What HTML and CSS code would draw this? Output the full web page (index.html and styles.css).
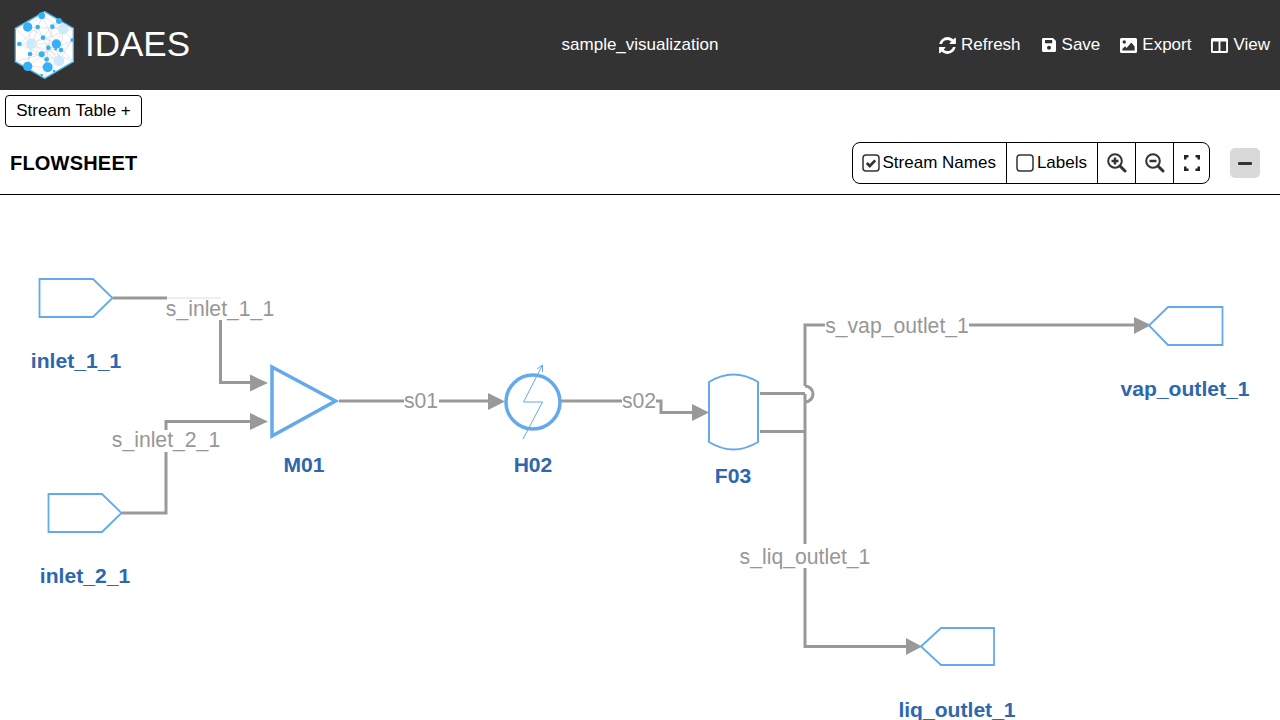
FILE: index.html
```html
<!DOCTYPE html>
<html lang="en">
<head>
<meta charset="utf-8">
<title>IDAES Flowsheet Visualizer</title>
<link rel="stylesheet" href="styles.css">
</head>
<body>
<header class="topbar">
  <div class="brand">
    <svg class="logo" viewBox="0 0 210 240" width="70" height="80" aria-hidden="true">
      <polygon points="104,20 190,70 190,170 104,220 16,170 16,70" class="hex"/>
      <g class="web">
        <path d="M53 66L160 72L139 117L64 116L53 184L113 187L147 168L139 117L95 32L53 66L64 116L95 148L113 187M83 66L99 98L139 117M127 65L160 72L187 105L147 168M28 117L64 116L99 98L127 65M60 147L95 148L139 117M16 70L64 116L190 170M190 70L64 116M104 20L83 66L60 147L53 184M104 220L113 187L110 163L115 128L99 98M16 170L95 148L190 105M147 48L127 65L115 128L147 168M153 135L139 117M53 66L139 117L190 170M28 117L95 148L147 168M53 184L139 117M64 116L147 168M95 32L160 72L153 135M83 66L28 117M113 187L187 105"/>
      </g>
      <g class="dot-soft">
        <circle cx="160" cy="72" r="16"/><circle cx="64" cy="116" r="16"/><circle cx="147" cy="168" r="16"/>
      </g>
      <g class="dot-strong">
        <circle cx="53" cy="66" r="14"/><circle cx="139" cy="117" r="14"/><circle cx="53" cy="184" r="14"/><circle cx="113" cy="187" r="15"/><circle cx="95" cy="32" r="10"/><circle cx="147" cy="48" r="9"/><circle cx="95" cy="148" r="9"/>
        <circle cx="83" cy="66" r="7"/><circle cx="127" cy="65" r="7"/><circle cx="28" cy="117" r="7"/><circle cx="99" cy="98" r="7"/><circle cx="115" cy="128" r="7"/><circle cx="153" cy="135" r="7"/><circle cx="60" cy="147" r="7"/><circle cx="110" cy="163" r="7"/><circle cx="137" cy="133" r="4"/><circle cx="132" cy="198" r="4"/><circle cx="95" cy="210" r="4"/><circle cx="187" cy="105" r="6"/>
      </g>
    </svg>
    <span class="brand-name">IDAES</span>
  </div>
  <div class="model-name">sample_visualization</div>
  <nav class="menu">
    <a class="menu-item">
      <svg class="icon icon-refresh" viewBox="120 120 1552 1552"><path d="M1639 1056q0 5-1 7-64 268-268 434.5t-478 166.5q-146 0-282.5-55t-243.5-157l-129 129q-19 19-45 19t-45-19-19-45v-448q0-26 19-45t45-19h448q26 0 45 19t19 45-19 45l-137 137q71 66 161 102t187 36q134 0 250-65t186-179q11-17 53-117 8-23 30-23h192q13 0 22.5 9.5t9.5 22.5zm25-800v448q0 26-19 45t-45 19h-448q-26 0-45-19t-19-45 19-45l138-138q-148-137-349-137-134 0-250 65t-186 179q-11 17-53 117-8 23-30 23h-199q-13 0-22.5-9.5t-9.5-22.5v-7q65-268 270-434.5t480-166.5q146 0 284 55.5t245 156.5l130-129q19-19 45-19t45 19 19 45z"/></svg>
      Refresh</a>
    <a class="menu-item">
      <svg class="icon" viewBox="0 0 16 16"><path fill-rule="evenodd" d="M2 1h10l3 3v9.500a1.500 1.500 0 0 1-1.500 1.500h-11A1.500 1.500 0 0 1 1 13.500v-11A1.500 1.500 0 0 1 2 1zM4 3v3.200h7.200V3zM8 8.700a2 2 0 1 0 0 4 2 2 0 0 0 0-4z"/></svg>
      Save</a>
    <a class="menu-item">
      <svg class="icon icon-wide" viewBox="0 0 18 15" preserveAspectRatio="none"><path fill-rule="evenodd" d="M1.500 0h15A1.500 1.500 0 0 1 18 1.500v12a1.500 1.500 0 0 1-1.500 1.500h-15A1.500 1.500 0 0 1 0 13.500v-12A1.500 1.500 0 0 1 1.500 0zM4.500 2.200a1.800 1.800 0 1 0 0 3.600 1.800 1.800 0 0 0 0-3.600zM2.500 12.500h13V8.500l-3.500-4-5 5.500-1.700-1.700-2.800 2.700z"/></svg>
      Export</a>
    <a class="menu-item">
      <svg class="icon icon-wide" viewBox="0 0 18 15" preserveAspectRatio="none"><path fill-rule="evenodd" d="M1.500 0h15A1.500 1.500 0 0 1 18 1.500v12a1.500 1.500 0 0 1-1.500 1.500h-15A1.500 1.500 0 0 1 0 13.500v-12A1.500 1.500 0 0 1 1.500 0zM2 3.500v9.500h6V3.500zM10 3.500v9.500h6V3.500z"/></svg>
      View</a>
  </nav>
</header>

<div class="stream-row"><button class="stream-btn">Stream Table +</button></div>

<section class="flow-head">
  <h1 class="flow-title">FLOWSHEET</h1>
  <div class="toolbar">
    <div class="tool tool-check">
      <svg class="check-icon" viewBox="0 0 18 18"><rect x="1" y="1" width="16" height="16" rx="3" class="box"/><path d="M4.800 9l3 3 5.400-5.600" class="tick"/></svg>
      Stream Names</div>
    <div class="tool tool-check">
      <svg class="check-icon" viewBox="0 0 18 18"><rect x="1" y="1" width="16" height="16" rx="3" class="box"/></svg>
      Labels</div>
    <div class="tool tool-icon">
      <svg class="tool-svg" viewBox="0 0 20 20"><circle cx="8" cy="8" r="6.800" class="lens"/><path d="M13 13l5 5" class="handle"/><path d="M8 4.500v7M4.500 8h7" class="sign"/></svg>
    </div>
    <div class="tool tool-icon">
      <svg class="tool-svg" viewBox="0 0 20 20"><circle cx="8" cy="8" r="6.800" class="lens"/><path d="M13 13l5 5" class="handle"/><path d="M4.500 8h7" class="sign"/></svg>
    </div>
    <div class="tool tool-icon">
      <svg class="tool-svg tool-expand" viewBox="0 0 16 16"><path d="M1.200 4.500V1.200H4.500M11.500 1.200h3.300V4.500M14.800 11.500v3.300H11.500M4.500 14.800H1.200V11.500" class="corner"/></svg>
    </div>
  </div>
  <button class="collapse-btn" aria-label="Collapse"><span class="collapse-bar"></span></button>
</section>

<svg class="diagram" viewBox="0 195 1280 525" width="1280" height="525">
  <g class="pipes">
    <path class="pipe-faint" d="M166 298H221"/>
    <path d="M113 298H167"/>
    <path d="M220.500 320V382.500H252"/>
    <path d="M122 513H166V452"/>
    <path d="M166 430V421.500H252"/>
    <path d="M339 401H404"/>
    <path d="M439 401H490"/>
    <path d="M561 401H622"/>
    <path d="M656 401H661V412.500H694"/>
    <path d="M760 393.500H805"/>
    <path d="M760 431.500H805"/>
    <path d="M825 325H805V386"/>
    <path class="pipe-jump" d="M805 386A8 8 0 0 1 805 402"/>
    <path d="M805 394V544"/>
    <path d="M805 568V646.500H908"/>
    <path d="M969 325H1136"/>
  </g>
  <g class="arrows">
    <polygon points="250,374.500 268,383 250,391.500"/>
    <polygon points="250,413 268,421.500 250,430"/>
    <polygon points="488,393 505,401.500 488,410"/>
    <polygon points="692,404 709,412.500 692,421"/>
    <polygon points="1134,317 1151,325 1134,334"/>
    <polygon points="906,638 922,646.500 906,655"/>
  </g>

  <g class="unit">
    <polygon points="39.500,279 93,279 112.500,298 93,317 39.500,317"/>
    <polygon points="48.500,494 102,494 121.500,513 102,532 48.500,532"/>
    <polygon points="1149,325.500 1168,307 1222.500,307 1222.500,345 1168,345"/>
    <polygon points="921,646.500 941,628 994,628 994,665 941,665"/>
    <path class="unit-vessel" d="M709 382Q733.500 367 758 382V442Q733.500 457 709 442Z"/>
  </g>
  <polygon class="unit-thick" points="272,367 335.500,401 272,436"/>
  <circle class="unit-thick" cx="533" cy="402" r="27"/>
  <path class="bolt" d="M523 439L542.500 402H523.500L542.500 365M537 369L542.500 365L542.500 372"/>

  <g class="stream-label">
    <text x="220" y="316">s_inlet_1_1</text>
    <text x="166" y="447">s_inlet_2_1</text>
    <text x="421" y="408">s01</text>
    <text x="639" y="408">s02</text>
    <text x="897" y="333">s_vap_outlet_1</text>
    <text x="805" y="564">s_liq_outlet_1</text>
  </g>
  <g class="unit-label">
    <text x="76" y="368">inlet_1_1</text>
    <text x="85" y="583">inlet_2_1</text>
    <text x="304" y="472">M01</text>
    <text x="533" y="472">H02</text>
    <text x="733" y="483">F03</text>
    <text x="1185" y="396">vap_outlet_1</text>
    <text x="957" y="717">liq_outlet_1</text>
  </g>
</svg>
</body>
</html>
```
FILE: styles.css
```css
* { box-sizing: border-box; }
html, body { margin: 0; height: 720px; overflow: hidden; background: #fff; }
body { font-family: "Liberation Sans", Arial, sans-serif; font-size: 17px; color: #000; }

.topbar {
  height: 90px;
  background: #333;
  color: #fff;
  display: grid;
  grid-template-columns: 1fr auto 1fr;
  align-items: center;
}
.brand { display: flex; align-items: center; padding-left: 10px; }
.logo { display: block; flex: none; }
.hex { fill: #fff; stroke: #4bb4ea; stroke-width: 4; stroke-linejoin: round; }
.web path { fill: none; stroke: #dadada; stroke-width: 2; }
.dot-strong { fill: #35b1f8; }
.dot-soft { fill: #cfeafb; }
.brand-name { font-size: 35px; margin-left: 5px; padding-bottom: 3px; line-height: 1; }
.model-name { font-size: 17px; }
.menu { display: flex; justify-content: flex-end; gap: 20px; padding-right: 10px; }
.menu-item { display: flex; align-items: center; gap: 5px; color: #fff; }
.icon { width: 16px; height: 16px; fill: #fff; display: block; }
.icon-refresh { width: 17px; height: 17px; }
.icon-wide { width: 17px; height: 15px; }

.stream-row { height: 37px; padding: 5px 0 0 5px; }
.stream-btn {
  width: 137px;
  height: 32px;
  padding: 0;
  background: #fff;
  border: 1px solid #000;
  border-radius: 4px;
  font: inherit;
  color: #000;
}

.flow-head {
  height: 68px;
  padding: 15px 20px 10px 10px;
  border-bottom: 1px solid #000;
  display: flex;
  align-items: center;
}
.flow-title { margin: 0 auto 0 0; font-size: 20px; font-weight: 700; letter-spacing: 0.2px; }
.toolbar {
  display: flex;
  height: 42px;
  border: 1px solid #000;
  border-radius: 8px;
}
.tool { display: flex; align-items: center; border-left: 1px solid #000; }
.tool:first-child { border-left: 0; }
.tool-check { padding: 0 10px 0 9px; gap: 3px; }
.tool-icon { width: 38px; justify-content: center; }
.tool:last-child { width: 36px; }
.check-icon { width: 18px; height: 18px; display: block; }
.box { fill: none; stroke: #333; stroke-width: 1.500; }
.tick { fill: none; stroke: #333; stroke-width: 2.800; }
.tool-svg { width: 20px; height: 20px; display: block; }
.tool-expand { width: 16px; height: 16px; }
.lens { fill: none; stroke: #333; stroke-width: 2; }
.handle { fill: none; stroke: #333; stroke-width: 3; stroke-linecap: round; }
.sign { fill: none; stroke: #333; stroke-width: 2.500; }
.corner { fill: none; stroke: #222; stroke-width: 2.600; }
.collapse-btn {
  width: 30px;
  height: 30px;
  margin-left: 20px;
  padding: 0;
  border: 0;
  border-radius: 5px;
  background: #d9d9d9;
  display: flex;
  align-items: center;
  justify-content: center;
}
.collapse-bar { width: 14px; height: 3px; background: #333; border-radius: 1px; }

.diagram { display: block; }
.pipes path { fill: none; stroke: #999; stroke-width: 3; }
.pipes .pipe-faint { stroke: #e9e9e9; stroke-width: 1.500; }
.arrows { fill: #999; }
.unit polygon, .unit path { fill: #fff; stroke: #63aaec; stroke-width: 1.800; }
.unit .unit-vessel { stroke-width: 2; }
.unit-thick { fill: #fff; stroke: #63aaec; stroke-width: 3.500; }
.bolt { fill: none; stroke: #63aaec; stroke-width: 1; }
.stream-label text { font-size: 21.200px; fill: #979797; text-anchor: middle; }
.unit-label text { font-size: 21.100px; font-weight: 700; fill: #2d67b0; text-anchor: middle; }
```
